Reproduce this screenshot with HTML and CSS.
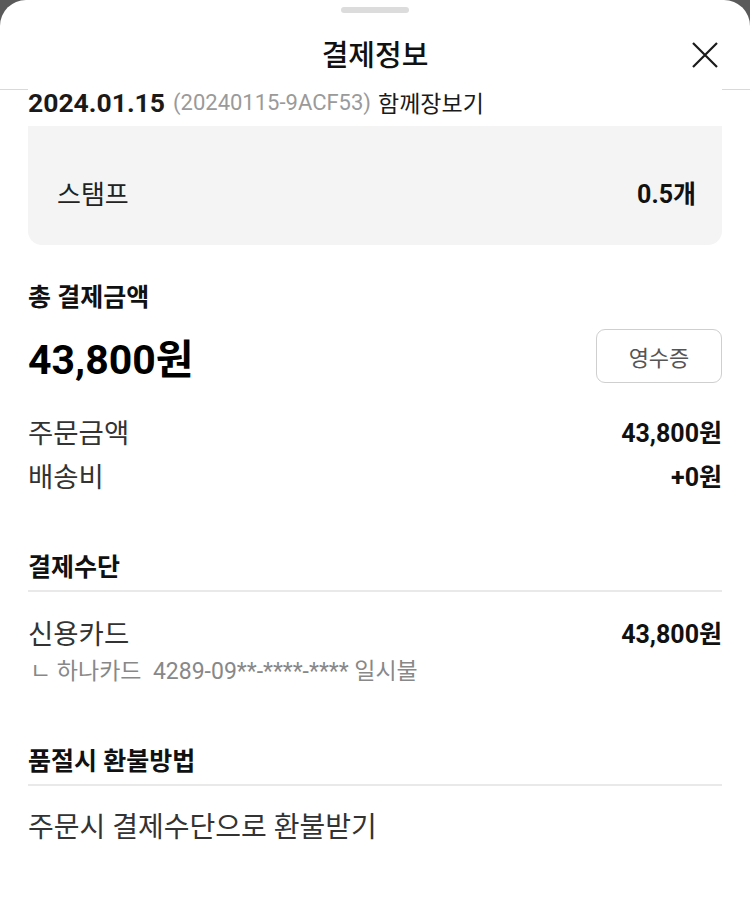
FILE: index.html
```html
<!DOCTYPE html>
<html lang="ko">
<head>
<meta charset="utf-8">
<title>결제정보</title>
<link rel="stylesheet" href="styles.css">
</head>
<body>
<div class="sheet">
  <div class="handle"></div>
  <header class="header">
    <h1 class="title">결제정보</h1>
    <button class="close" aria-label="닫기">
      <svg width="28" height="28" viewBox="0 0 28 28"><path d="M2 2 L26 26 M26 2 L2 26" stroke="#1a1a1a" stroke-width="2.2" fill="none"/></svg>
    </button>
  </header>
  <main class="content">
    <div class="order-line">
      <span class="date">2024.01.15</span>
      <span class="order-no">(20240115-9ACF53)</span>
      <span class="order-type">함께장보기</span>
    </div>
    <div class="stamp-box">
      <span class="stamp-label">스탬프</span>
      <span class="stamp-value">0.5개</span>
    </div>

    <section class="total">
      <h2 class="sec-title">총 결제금액</h2>
      <div class="total-row">
        <span class="total-amount">43,800원</span>
        <button class="receipt">영수증</button>
      </div>
      <div class="rows">
        <div class="row"><span class="label">주문금액</span><span class="value">43,800원</span></div>
        <div class="row"><span class="label">배송비</span><span class="value">+0원</span></div>
      </div>
    </section>

    <section class="method">
      <h2 class="sec-title ruled">결제수단</h2>
      <div class="row card-row"><span class="label">신용카드</span><span class="value">43,800원</span></div>
      <div class="card-detail">ㄴ 하나카드&nbsp; 4289-09**-****-**** 일시불</div>
    </section>

    <section class="refund">
      <h2 class="sec-title ruled">품절시 환불방법</h2>
      <p class="refund-text">주문시 결제수단으로 환불받기</p>
    </section>
  </main>
</div>
</body>
</html>
```

FILE: styles.css
```css
* { box-sizing: border-box; }
html, body { margin: 0; padding: 0; }
body {
  background: #5a5a5a;
  font-family: "Roboto", "Noto Sans CJK KR", sans-serif;
  color: #222;
  height: 921px;
  overflow: hidden;
}
.sheet {
  background: #fff;
  border-radius: 26px 26px 0 0;
  height: 921px;
  display: flex;
  flex-direction: column;
}
.handle {
  width: 68px;
  height: 6px;
  border-radius: 3px;
  background: #dcdcdc;
  margin: 7px auto 0;
}
.header {
  height: 77px;
  border-bottom: 1px solid #d4dae0;
  display: flex;
  align-items: center;
  justify-content: center;
  position: relative;
}
.title {
  margin: 0;
  font-size: 29px;
  font-weight: 500;
  color: #111;
  line-height: 1;
  margin-top: 10px;
}
.close {
  position: absolute;
  right: 31px;
  top: 28px;
  border: 0;
  background: none;
  padding: 0;
  width: 28px;
  height: 28px;
  display: flex;
}
.content {
  margin: -1px 28px 0;
  background: #fff;
  position: relative;
}
.order-line {
  height: 36px;
  display: flex;
  align-items: center;
  gap: 8px;
  white-space: nowrap;
  margin-top: -5px;
}
.date { font-size: 26.5px; font-weight: 700; color: #1a1a1a; }
.order-no { font-size: 22px; color: #9a9a9a; }
.order-type { font-size: 23px; color: #1a1a1a; margin-left: -1px; }
.stamp-box {
  background: #f4f4f4;
  border-radius: 0 0 14px 14px;
  height: 119px;
  margin-top: 6px;
  display: flex;
  justify-content: space-between;
  align-items: flex-end;
  padding: 0 26px 33px 29px;
  line-height: 34px;
}
.stamp-label { font-size: 26px; color: #222; }
.stamp-value { font-size: 25px; font-weight: 700; color: #111; }

.sec-title {
  margin: 0;
  font-size: 25px;
  font-weight: 700;
  line-height: 34px;
  color: #111;
}
.sec-title.ruled {
  padding-bottom: 5px;
  border-bottom: 2px solid #e9e9e9;
}
.total { margin-top: 36px; }
.total-row {
  margin-top: 14px;
  height: 54px;
  display: flex;
  justify-content: space-between;
  align-items: center;
}
.total-amount { font-size: 41px; font-weight: 700; color: #000; }
.receipt {
  width: 126px;
  height: 54px;
  border: 1px solid #cfcfcf;
  border-radius: 9px;
  background: #fff;
  font-family: inherit;
  font-size: 22px;
  color: #555;
}
.rows { margin-top: 29px; }
.row {
  display: flex;
  justify-content: space-between;
  align-items: center;
  line-height: 44px;
}
.label { font-size: 27.5px; color: #333; }
.value { font-size: 25px; font-weight: 700; color: #111; }

.method { margin-top: 51px; }
.card-row { margin-top: 24px; line-height: 38px; }
.card-detail {
  font-size: 23px;
  color: #888;
  line-height: 36px;
  padding-left: 2px;
}
.refund { margin-top: 55px; }
.refund-text {
  margin: 23px 0 0;
  font-size: 28px;
  line-height: 38px;
  color: #333;
}
```
